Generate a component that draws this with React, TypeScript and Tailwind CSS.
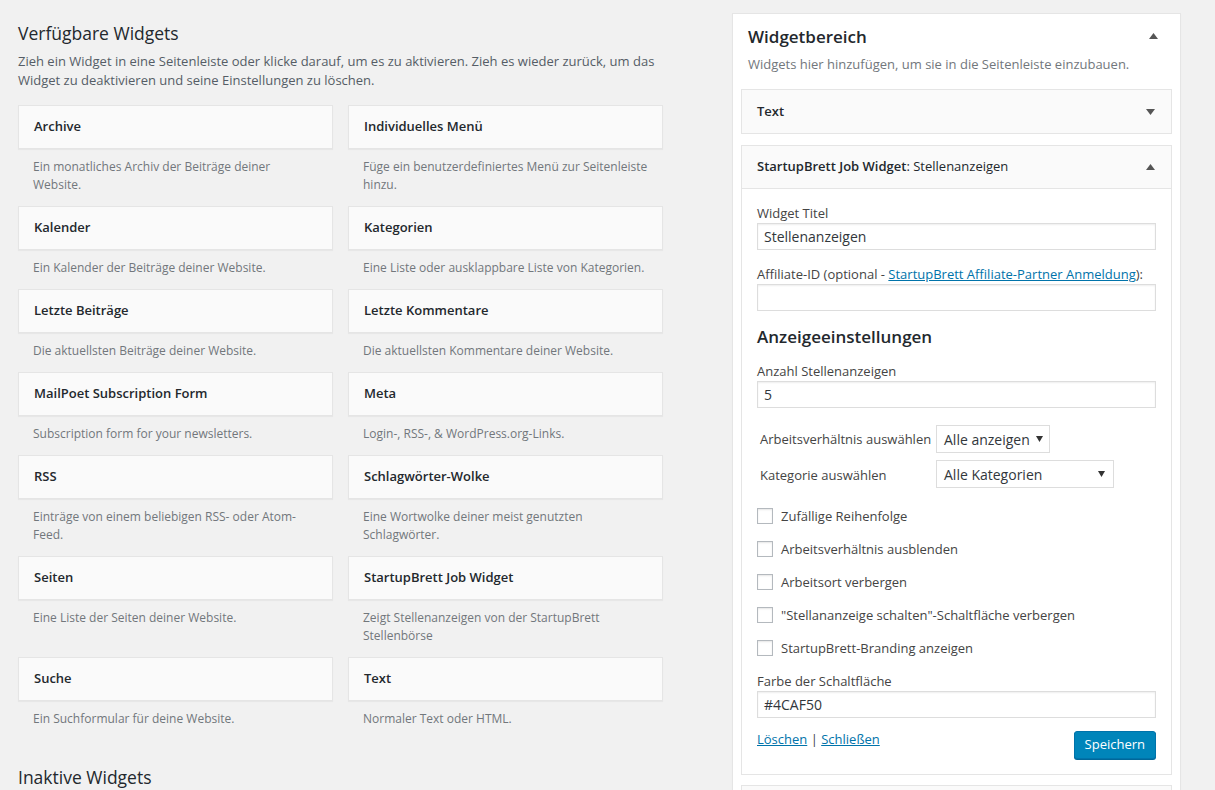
import { useState } from 'react';

type Widget = { title: string; desc: string };

const widgets: Widget[][] = [
  [
    { title: 'Archive', desc: 'Ein monatliches Archiv der Beiträge deiner Website.' },
    { title: 'Individuelles Menü', desc: 'Füge ein benutzerdefiniertes Menü zur Seitenleiste hinzu.' },
  ],
  [
    { title: 'Kalender', desc: 'Ein Kalender der Beiträge deiner Website.' },
    { title: 'Kategorien', desc: 'Eine Liste oder ausklappbare Liste von Kategorien.' },
  ],
  [
    { title: 'Letzte Beiträge', desc: 'Die aktuellsten Beiträge deiner Website.' },
    { title: 'Letzte Kommentare', desc: 'Die aktuellsten Kommentare deiner Website.' },
  ],
  [
    { title: 'MailPoet Subscription Form', desc: 'Subscription form for your newsletters.' },
    { title: 'Meta', desc: 'Login-, RSS-, & WordPress.org-Links.' },
  ],
  [
    { title: 'RSS', desc: 'Einträge von einem beliebigen RSS- oder Atom-Feed.' },
    { title: 'Schlagwörter-Wolke', desc: 'Eine Wortwolke deiner meist genutzten Schlagwörter.' },
  ],
  [
    { title: 'Seiten', desc: 'Eine Liste der Seiten deiner Website.' },
    { title: 'StartupBrett Job Widget', desc: 'Zeigt Stellenanzeigen von der StartupBrett Stellenbörse' },
  ],
  [
    { title: 'Suche', desc: 'Ein Suchformular für deine Website.' },
    { title: 'Text', desc: 'Normaler Text oder HTML.' },
  ],
];

const checks = [
  'Zufällige Reihenfolge',
  'Arbeitsverhältnis ausblenden',
  'Arbeitsort verbergen',
  '"Stellananzeige schalten"-Schaltfläche verbergen',
  'StartupBrett-Branding anzeigen',
];

function Caret({ up }: { up?: boolean }) {
  return (
    <svg width="9" height="6" viewBox="0 0 9 6" className="fill-[#555]">
      {up ? <path d="M0 6 L4.5 0 L9 6 Z" /> : <path d="M0 0 L9 0 L4.5 6 Z" />}
    </svg>
  );
}

function WidgetCard({ w }: { w: Widget }) {
  return (
    <div>
      <div className="flex h-[44px] items-center border border-[#e5e5e5] bg-[#fafafa] px-[15px] text-[13px] font-semibold text-[#23282d] shadow-[0_1px_1px_rgba(0,0,0,0.04)]">
        {w.title}
      </div>
      <p className="px-[15px] pb-[12px] pt-[9px] text-[12px] leading-[18px] text-[#72777c]">{w.desc}</p>
    </div>
  );
}

function TextInput({ value }: { value?: string }) {
  return (
    <div className="flex h-[27px] items-center border border-[#ddd] bg-white px-[6px] text-[14px] text-[#32373c] shadow-[inset_0_1px_2px_rgba(0,0,0,0.07)]">
      {value}
    </div>
  );
}

function Select({ value, w }: { value: string; w: string }) {
  return (
    <div className={`flex h-[28px] items-center justify-between gap-[6px] whitespace-nowrap border border-[#ddd] bg-white pl-[7px] pr-[8px] text-[14px] text-[#32373c] ${w}`}>
      <span>{value}</span>
      <svg width="7" height="6" viewBox="0 0 7 6" className="shrink-0 fill-[#333]">
        <path d="M0 0 L7 0 L3.5 6 Z" />
      </svg>
    </div>
  );
}

export default function App() {
  const [checked, setChecked] = useState<boolean[]>(checks.map(() => false));

  return (
    <div
      className="flex h-[790px] overflow-hidden bg-[#f1f1f1] text-[#444]"
      style={{ fontFamily: '"Open Sans", sans-serif' }}
    >
      {/* available widgets */}
      <div className="w-[663px] shrink-0 pl-[18px] pt-[22px]">
        <h2 className="text-[17.5px] leading-[22px] text-[#23282d]">Verfügbare Widgets</h2>
        <p className="mt-[8px] text-[13px] leading-[19px] text-[#555d66]">
          Zieh ein Widget in eine Seitenleiste oder klicke darauf, um es zu aktivieren. Zieh es wieder zurück, um das
          Widget zu deaktivieren und seine Einstellungen zu löschen.
        </p>
        <div className="mt-[15px] grid grid-cols-2 gap-x-[15px]">
          {widgets.map((row) => row.map((w) => <WidgetCard key={w.title} w={w} />))}
        </div>
        <h2 className="mt-[26px] text-[17.5px] leading-[22px] text-[#23282d]">Inaktive Widgets</h2>
      </div>

      {/* sidebar */}
      <div className="ml-[69px] mt-[13px] w-[449px] shrink-0">
        <div className="h-[800px] border border-[#e5e5e5] bg-white px-[8px] shadow-[0_1px_1px_rgba(0,0,0,0.04)]">
          <div className="flex items-start justify-between pl-[7px] pr-[14px] pt-[12px]">
            <h2 className="text-[17px] font-semibold leading-[22px] text-[#23282d]">Widgetbereich</h2>
            <div className="pt-[7px]">
              <Caret up />
            </div>
          </div>
          <p className="mt-[7px] pl-[7px] text-[13px] leading-[18px] text-[#72777c]">
            Widgets hier hinzufügen, um sie in die Seitenleiste einzubauen.
          </p>

          <div className="mt-[16px] flex h-[45px] items-center justify-between border border-[#e5e5e5] bg-[#fafafa] pl-[15px] pr-[16px] text-[13px] font-semibold text-[#23282d]">
            <span>Text</span>
            <Caret />
          </div>

          <div className="mt-[11px] border border-[#e5e5e5] bg-white">
            <div className="flex h-[43px] items-center justify-between border-b border-[#e5e5e5] bg-[#fafafa] pl-[15px] pr-[16px] text-[13px] text-[#23282d]">
              <span>
                <span className="font-semibold">StartupBrett Job Widget</span>: Stellenanzeigen
              </span>
              <Caret up />
            </div>

            <div className="px-[15px] pb-[15px] pt-[15px] text-[13px] text-[#444]">
              <label className="block leading-[18px]">Widget Titel</label>
              <div className="mt-[1px]">
                <TextInput value="Stellenanzeigen" />
              </div>
              <label className="mt-[15px] block leading-[18px]">
                Affiliate-ID (optional -{' '}
                <a className="text-[#0073aa] underline">StartupBrett Affiliate-Partner Anmeldung</a>):
              </label>
              <div className="mt-[1px]">
                <TextInput />
              </div>

              <h3 className="mt-[14px] text-[17px] font-semibold leading-[24px] text-[#23282d]">
                Anzeigeeinstellungen
              </h3>

              <label className="mt-[13px] block leading-[18px]">Anzahl Stellenanzeigen</label>
              <div className="mt-[1px]">
                <TextInput value="5" />
              </div>

              <div className="mt-[17px] grid grid-cols-[176px_1fr] items-center gap-y-[7px] pl-[3px]">
                <span className="pt-[2px]">Arbeitsverhältnis auswählen</span>
                <Select value="Alle anzeigen" w="w-[114px]" />
                <span className="pt-[4px]">Kategorie auswählen</span>
                <Select value="Alle Kategorien" w="w-[178px]" />
              </div>

              <div className="mt-[20px] flex flex-col gap-[17px]">
                {checks.map((c, i) => (
                  <label key={c} className="flex items-center gap-[8px] leading-[16px]">
                    <button
                      type="button"
                      onClick={() => setChecked((s) => s.map((v, j) => (j === i ? !v : v)))}
                      className="flex h-[16px] w-[16px] shrink-0 items-center justify-center border border-[#b4b9be] bg-white shadow-[inset_0_1px_2px_rgba(0,0,0,0.1)]"
                    >
                      {checked[i] && <span className="text-[12px] leading-none text-[#1e8cbe]">✓</span>}
                    </button>
                    <span>{c}</span>
                  </label>
                ))}
              </div>

              <label className="mt-[16px] block leading-[18px]">Farbe der Schaltfläche</label>
              <div className="mt-[1px]">
                <TextInput value="#4CAF50" />
              </div>

              <div className="mt-[11px] flex items-start justify-between">
                <div className="pt-[1px] leading-[18px]">
                  <a className="text-[#0073aa] underline">Löschen</a> | <a className="text-[#0073aa] underline">Schließen</a>
                </div>
                <button
                  type="button"
                  className="mt-[2px] h-[28px] rounded-[3px] border border-[#0073aa] bg-[#0085ba] px-[10px] text-[13px] text-white shadow-[0_1px_0_#006799]"
                >
                  Speichern
                </button>
              </div>
            </div>
          </div>

          <div className="mt-[10px] h-[20px] border border-[#e5e5e5] bg-[#fafafa]" />
        </div>
      </div>
    </div>
  );
}
